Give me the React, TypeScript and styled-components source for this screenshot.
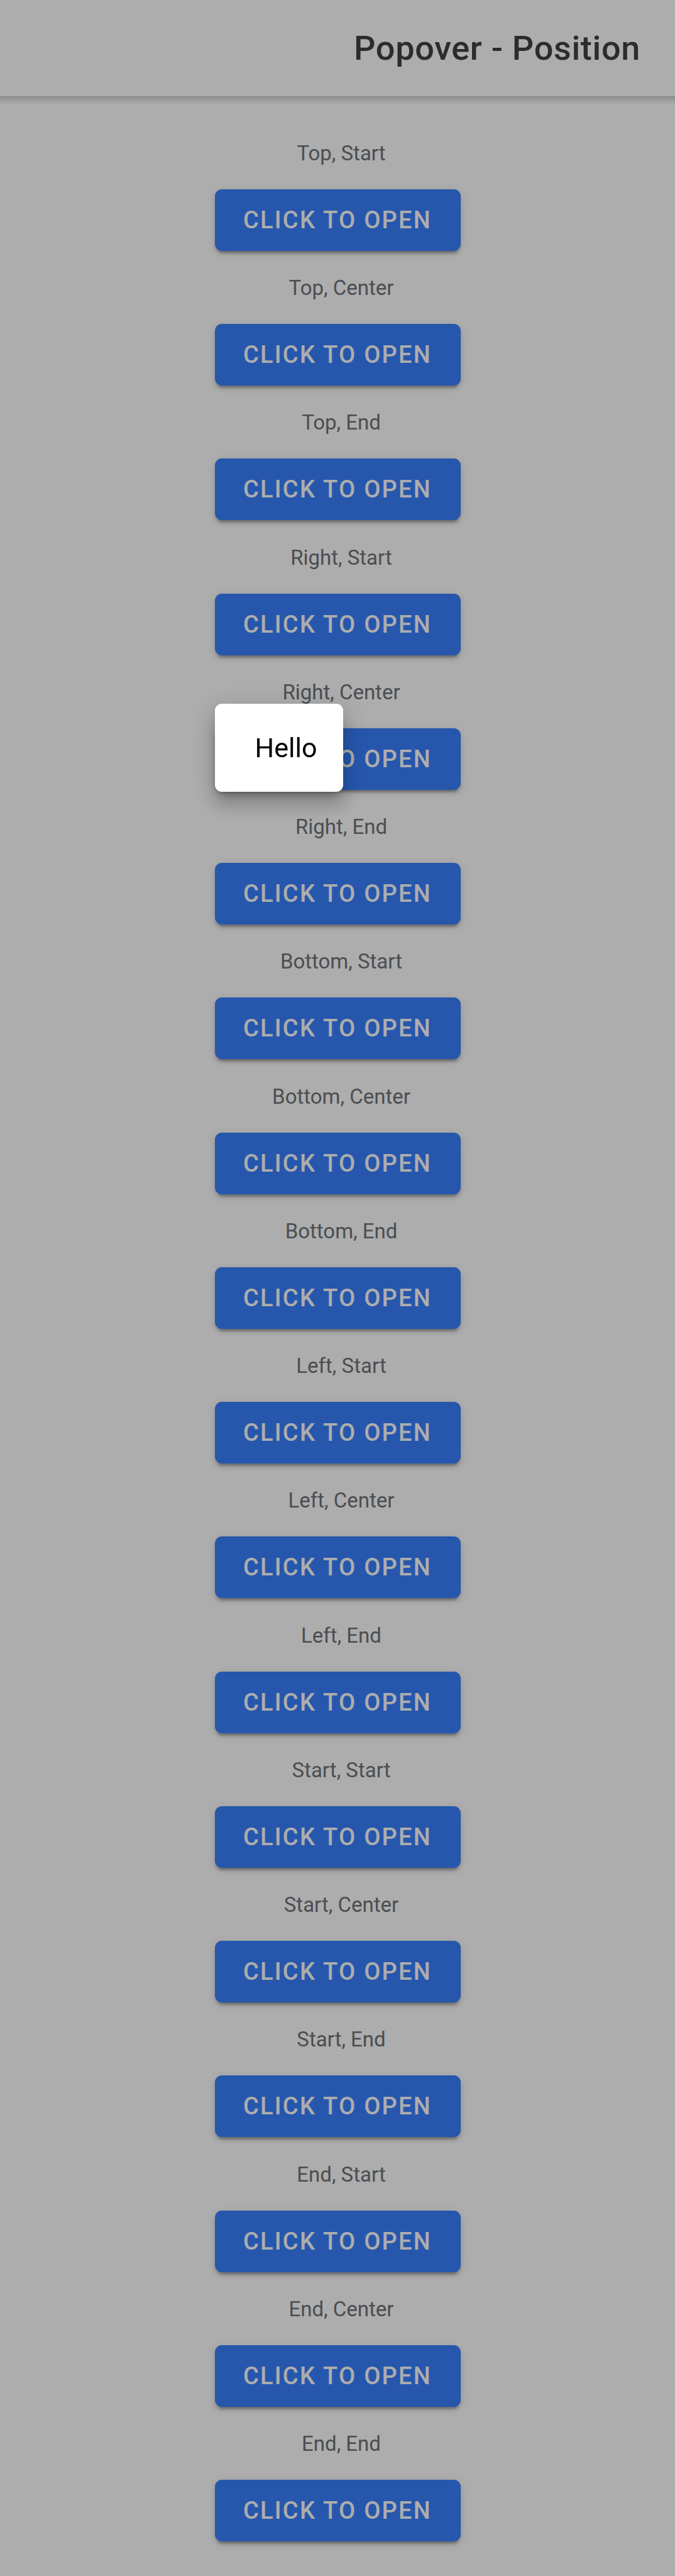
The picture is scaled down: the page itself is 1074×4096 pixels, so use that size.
import React, { useState } from "react";
import styled, { createGlobalStyle } from "styled-components";

const GlobalStyle = createGlobalStyle`
  *, *::before, *::after { box-sizing: border-box; }
  body {
    margin: 0;
    background: #ffffff;
    font-family: Roboto, "Liberation Sans", sans-serif;
    -webkit-font-smoothing: antialiased;
  }
`;

const Page = styled.div`
  display: flex;
  flex-direction: column;
  min-height: 100vh;
`;

const Header = styled.header`
  position: relative;
  display: flex;
  align-items: center;
  justify-content: flex-end;
  height: 153px;
  padding: 0 55px;

  &::after {
    content: "";
    position: absolute;
    top: 100%;
    left: 0;
    right: 0;
    height: 14px;
    background: linear-gradient(rgba(0, 0, 0, 0.2), rgba(0, 0, 0, 0.06) 60%, transparent);
  }
`;

const Title = styled.h1`
  margin: 0;
  color: #424242;
  font-size: 54px;
  font-weight: 500;
  line-height: 64px;
  letter-spacing: 0.0125em;
`;

const PositionList = styled.main`
  flex: 1;
  display: flex;
  flex-direction: column;
  align-items: center;
  justify-content: space-between;
  padding: 71px 14px 55px;
`;

const PositionItem = styled.section`
  display: flex;
  flex-direction: column;
  align-items: center;
  gap: 38px;
`;

const Label = styled.h2`
  margin: 0;
  padding-left: 12px;
  color: #6f7378;
  font-size: 33px;
  font-weight: 400;
  line-height: 39px;
`;

const Anchor = styled.div`
  position: relative;
`;

const TriggerButton = styled.button`
  display: block;
  min-width: 391px;
  height: 98px;
  padding: 0 42px;
  border: 0;
  border-radius: 11px;
  background: #3880ff;
  color: #ffffff;
  font-family: inherit;
  font-size: 38px;
  font-weight: 500;
  line-height: 44px;
  letter-spacing: 0.06em;
  text-transform: uppercase;
  box-shadow:
    0 8px 3px -5px rgba(0, 0, 0, 0.2),
    0 5px 5px rgba(0, 0, 0, 0.14),
    0 3px 14px rgba(0, 0, 0, 0.12);
  cursor: pointer;
`;

const Backdrop = styled.div`
  position: fixed;
  inset: 0;
  z-index: 1;
  background: rgba(0, 0, 0, 0.32);
`;

const Popover = styled.div`
  position: absolute;
  top: -39px;
  left: 0;
  z-index: 2;
  padding: 44px 42px 44px 64px;
  border-radius: 11px;
  background: #ffffff;
  color: #000000;
  font-size: 43px;
  line-height: 52px;
  box-shadow:
    0 14px 14px -8px rgba(0, 0, 0, 0.2),
    0 22px 27px 3px rgba(0, 0, 0, 0.14),
    0 8px 38px 5px rgba(0, 0, 0, 0.12);
`;

const positions = [
  "Top, Start",
  "Top, Center",
  "Top, End",
  "Right, Start",
  "Right, Center",
  "Right, End",
  "Bottom, Start",
  "Bottom, Center",
  "Bottom, End",
  "Left, Start",
  "Left, Center",
  "Left, End",
  "Start, Start",
  "Start, Center",
  "Start, End",
  "End, Start",
  "End, Center",
  "End, End",
];

export default function App() {
  const [open, setOpen] = useState<string | null>("Right, Center");

  return (
    <Page>
      <GlobalStyle />
      <Header>
        <Title>Popover - Position</Title>
      </Header>
      <PositionList>
        {positions.map((position) => (
          <PositionItem key={position}>
            <Label>{position}</Label>
            <Anchor>
              <TriggerButton
                type="button"
                aria-haspopup="dialog"
                aria-expanded={open === position}
                onClick={() => setOpen(position)}
              >
                Click to open
              </TriggerButton>
              {open === position && <Popover role="dialog">Hello</Popover>}
            </Anchor>
          </PositionItem>
        ))}
      </PositionList>
      {open && <Backdrop onClick={() => setOpen(null)} />}
    </Page>
  );
}
